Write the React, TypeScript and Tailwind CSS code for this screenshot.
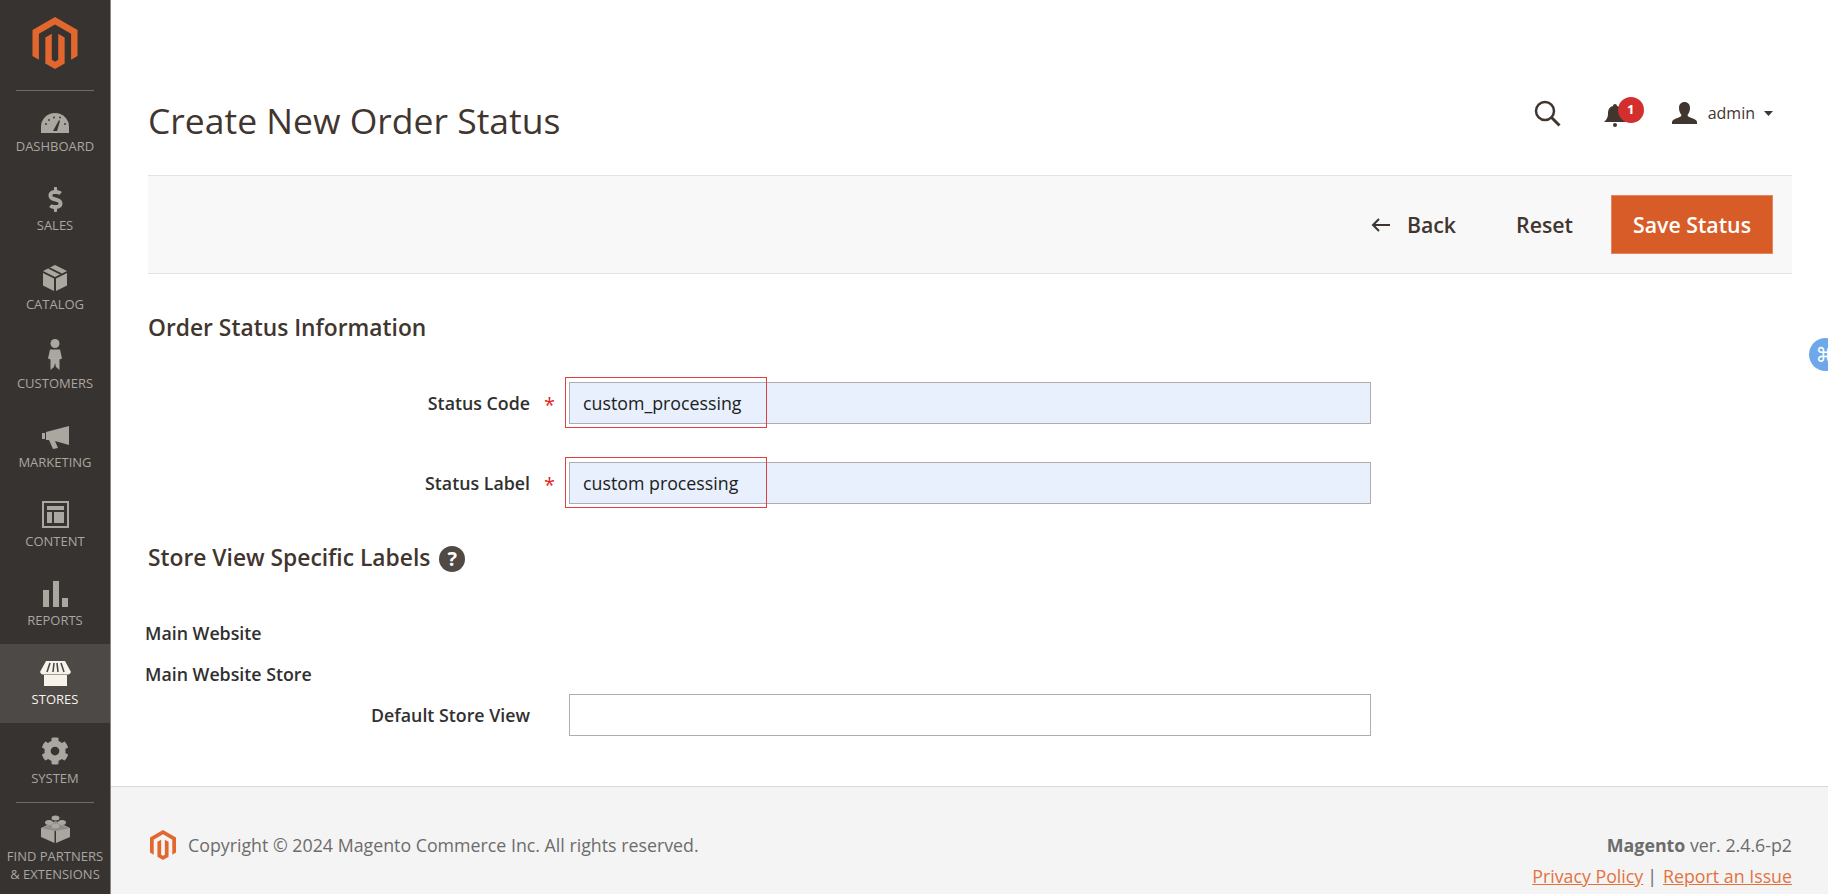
import { FaCog, FaDollarSign } from "react-icons/fa";
import { SiMagento } from "react-icons/si";

function DashboardIcon() {
  return (
    <svg width="28" height="20" viewBox="0 0 28 20">
      <path d="M0 20v-6a14 14 0 0 1 28 0v6z" fill="currentColor" />
      <path d="M12 18l6-11 1 1-3 10z" fill="#373330" />
      <g fill="#373330">
        <circle cx="5" cy="11" r="0.9" />
        <circle cx="8" cy="7" r="0.9" />
        <circle cx="13" cy="4.5" r="0.9" />
        <circle cx="19" cy="4.5" r="0.9" />
        <circle cx="24" cy="11" r="0.9" />
      </g>
    </svg>
  );
}

function CatalogIcon() {
  return (
    <svg width="24" height="26" viewBox="0 0 24 26" fill="currentColor">
      <path d="M12 0l12 6-12 6L0 6z" />
      <path d="M5 3.4l12 6 2-1-12-6z" fill="#373330" />
      <path d="M0 8l11 5.5V26L0 20.5zM24 8l-11 5.5V26l11-5.500z" />
    </svg>
  );
}

function CustomerIcon() {
  return (
    <svg width="14" height="31" viewBox="0 0 14 31" fill="currentColor">
      <circle cx="7" cy="4.5" r="4.5" />
      <path d="M2 10.500h10l2 9-2.500 1V31L8 28l-1-4-1 4-3.500 3V20.500L0 19.500z" />
    </svg>
  );
}

function MarketingIcon() {
  return (
    <svg width="27" height="23" viewBox="0 0 27 23" fill="currentColor">
      <rect x="0" y="7" width="3" height="6" />
      <path d="M4 6L27 0v19l-14-4 3 7-5 1-4-9H4z" />
    </svg>
  );
}

function ContentIcon() {
  return (
    <svg width="27" height="27" viewBox="0 0 27 27" fill="currentColor">
      <path fillRule="evenodd" d="M0 0h27v27H0zm2 2v23h23V2z" />
      <rect x="5" y="5" width="17" height="4" />
      <rect x="5" y="11" width="5" height="11" />
      <rect x="12" y="11" width="10" height="11" />
    </svg>
  );
}

function ReportsIcon() {
  return (
    <svg width="25" height="26" viewBox="0 0 25 26" fill="currentColor">
      <rect x="0" y="9" width="6" height="17" />
      <rect x="10" y="0" width="6" height="26" />
      <rect x="19" y="17" width="6" height="9" />
    </svg>
  );
}

function StoresIcon() {
  return (
    <svg width="31" height="25" viewBox="0 0 31 25" fill="currentColor">
      <path d="M6 0h19l6 11q-1 2.500-3 2.500H3Q1 13.500 0 11z" />
      <path d="M4 14h23v11H4z" />
      <path d="M10 2L7 11M14 2l-1 9M17 2l1 9M21 2l3 9" stroke="#4d4946" strokeWidth="1.600" fill="none" />
    </svg>
  );
}

function PartnersIcon() {
  return (
    <svg width="29" height="28" viewBox="0 0 29 28" fill="currentColor">
      <path d="M14.500 6L29 13v9l-14 6V17z" />
      <path d="M14.500 6L0 13v9l13.500 6V17z" />
      <path d="M14.500 7L28 13.500 14.500 16 1 13.500z" fill="#8f8b86" />
      <ellipse cx="14.500" cy="3" rx="4" ry="2.500" />
      <ellipse cx="8" cy="7.500" rx="4" ry="2.500" />
      <ellipse cx="21" cy="7.500" rx="4" ry="2.500" />
      <ellipse cx="14.500" cy="11" rx="4" ry="2.500" />
    </svg>
  );
}

const navItems = [
  { label: "DASHBOARD", icon: <DashboardIcon /> },
  { label: "SALES", icon: <FaDollarSign size={25} /> },
  { label: "CATALOG", icon: <CatalogIcon /> },
  { label: "CUSTOMERS", icon: <CustomerIcon /> },
  { label: "MARKETING", icon: <MarketingIcon /> },
  { label: "CONTENT", icon: <ContentIcon /> },
  { label: "REPORTS", icon: <ReportsIcon /> },
  { label: "STORES", icon: <StoresIcon />, active: true },
  { label: "SYSTEM", icon: <FaCog size={28} /> },
];

function Sidebar() {
  return (
    <aside className="flex h-full w-[111px] shrink-0 flex-col border-r border-[#8a8885] bg-[#373330] text-[#aaa6a0]">
      <div className="mx-[16px] flex h-[91px] shrink-0 items-start justify-center border-b border-[#6f6b67] pt-[17px]">
        <SiMagento size={52} className="text-[#e2672f]" />
      </div>
      {navItems.map((item) => (
        <div
          key={item.label}
          className={`flex h-[79px] shrink-0 flex-col items-center ${
            item.active ? "bg-[#4d4946] text-[#f7f3eb]" : ""
          }`}
        >
          <div className="flex h-[42px] items-end">{item.icon}</div>
          <span className="mt-[4px] text-[13px] leading-[18px]">{item.label}</span>
        </div>
      ))}
      <div className="mx-[16px] border-t border-[#6f6b67]" />
      <div className="flex flex-col items-center">
        <div className="flex h-[40px] items-end">
          <PartnersIcon />
        </div>
        <span className="mt-[4px] text-center text-[13px] leading-[18px]">
          FIND PARTNERS
          <br />& EXTENSIONS
        </span>
      </div>
    </aside>
  );
}

function Header() {
  return (
    <header className="flex h-[175px] shrink-0 items-start justify-between">
      <h1 className="mt-[93px] text-[35.5px] leading-[54px] font-normal text-[#41362f]">
        Create New Order Status
      </h1>
      <div className="mt-[98px] mr-[19px] flex h-[30px] items-center text-[#41362f]">
        <svg width="27" height="27" viewBox="0 0 27 27" fill="none" stroke="currentColor">
          <circle cx="11" cy="11" r="9" strokeWidth="2.500" />
          <path d="M17.500 17.500l8 8" strokeWidth="3" />
        </svg>
        <div className="relative mt-[3px] ml-[43px] h-[24px] w-[22px]">
          <svg width="22" height="24" viewBox="0 0 22 24" fill="currentColor">
            <path d="M11 1a2 2 0 0 1 2 2c4 1 5 4 5 8 0 4 2 6 4 8H0c2-2 4-4 4-8 0-4 1-7 5-8a2 2 0 0 1 2-2z" />
            <circle cx="11" cy="22" r="2" />
          </svg>
          <span className="absolute -top-[6px] left-[14px] flex h-[26px] w-[26px] items-center justify-center rounded-full bg-[#d32f2f] text-[13px] font-bold text-white">
            1
          </span>
        </div>
        <svg className="ml-[46px]" width="25" height="22" viewBox="0 0 25 22" fill="currentColor">
          <path d="M12.500 0c3.500 0 5.500 2.500 5.500 6 0 3-1.200 5.500-2.500 7 .3 1.500 1.500 2 4 3 3 1 5.500 2 5.500 4v2H0v-2c0-2 2.500-3 5.500-4 2.500-1 3.700-1.500 4-3C8.200 11.500 7 9 7 6c0-3.500 2-6 5.500-6z" />
        </svg>
        <span className="ml-[11px] text-[16px]">admin</span>
        <svg className="ml-[9px]" width="9" height="5" viewBox="0 0 9 5" fill="currentColor">
          <path d="M0 0h9L4.500 5z" />
        </svg>
      </div>
    </header>
  );
}

function ActionBar() {
  return (
    <div className="flex h-[99px] shrink-0 items-center justify-end border-y border-[#e3e3e3] bg-[#f8f8f8] pr-[19px] text-[21.3px] font-semibold text-[#41362f]">
      <svg width="19" height="14" viewBox="0 0 19 14" fill="none" stroke="currentColor" strokeWidth="2">
        <path d="M19 7H2M8 1L2 7l6 6" />
      </svg>
      <span className="ml-[17px]">Back</span>
      <span className="ml-[60px]">Reset</span>
      <button className="ml-[38px] h-[59px] w-[162px] border border-[#e8855a] bg-[#d85c27] text-white">
        Save Status
      </button>
    </div>
  );
}

function FieldRow({
  label,
  value,
  required,
  marked,
  className,
}: {
  label: string;
  value: string;
  required?: boolean;
  marked?: boolean;
  className?: string;
}) {
  return (
    <div className={`flex items-center ${className ?? ""}`}>
      <label className="w-[382px] text-right text-[17.8px] font-semibold text-[#303030]">{label}</label>
      <span className="w-[39px] pt-[4px] text-center text-[20px] leading-none text-[#e22626]">
        {required ? "*" : ""}
      </span>
      <div className="relative h-[42px] w-[802px]">
        <input
          readOnly
          value={value}
          className={`h-full w-full border border-[#adadad] px-[13px] text-[17.8px] text-[#202020] outline-none ${
            marked ? "bg-[#e8f0fe]" : "bg-white"
          }`}
        />
        {marked && (
          <div className="absolute -top-[5px] -left-[4px] h-[51px] w-[202px] border border-[#e04040]" />
        )}
      </div>
    </div>
  );
}

function Footer() {
  return (
    <footer className="flex h-[108px] shrink-0 justify-between border-t border-[#d9d9d9] bg-[#f4f4f4] pt-[46px] pr-[36px] pl-[37px] text-[17.8px] leading-[24px] text-[#6c6c6c]">
      <div className="flex h-[24px] items-center">
        <SiMagento size={30} className="text-[#e2672f]" />
        <span className="ml-[10px]">Copyright © 2024 Magento Commerce Inc. All rights reserved.</span>
      </div>
      <div className="text-right">
        <div>
          <b className="font-bold">Magento</b> ver. 2.4.6-p2
        </div>
        <div className="mt-[7px]">
          <a className="text-[#e2733f] underline">Privacy Policy</a>
          <span className="mr-[6px] ml-[4px]">|</span>
          <a className="text-[#e2733f] underline">Report an Issue</a>
        </div>
      </div>
    </footer>
  );
}

export default function App() {
  return (
    <div className="relative flex h-[894px] w-[1828px] overflow-hidden bg-white font-['Open_Sans','Liberation_Sans',sans-serif]">
      <Sidebar />
      <div className="flex min-w-0 flex-1 flex-col">
        <main className="flex flex-1 flex-col pr-[36px] pl-[37px]">
          <Header />
          <ActionBar />
          <h2 className="mt-[40px] text-[22.8px] leading-[28px] font-semibold text-[#41362f]">
            Order Status Information
          </h2>
          <FieldRow className="mt-[40px]" label="Status Code" value="custom_processing" required marked />
          <FieldRow className="mt-[38px]" label="Status Label" value="custom processing" required marked />
          <div className="mt-[39px] flex items-center">
            <h2 className="text-[22.8px] leading-[28px] font-semibold text-[#41362f]">
              Store View Specific Labels
            </h2>
            <span className="mt-[3px] ml-[9px] flex h-[26px] w-[26px] items-center justify-center rounded-full bg-[#514943] text-[20px] font-bold text-white">
              ?
            </span>
          </div>
          <div className="mt-[49px] -ml-[3px] text-[17.8px] leading-[24px] font-semibold text-[#303030]">
            Main Website
          </div>
          <div className="mt-[17px] -ml-[3px] text-[17.8px] leading-[24px] font-semibold text-[#303030]">
            Main Website Store
          </div>
          <FieldRow className="mt-[8px]" label="Default Store View" value="" />
        </main>
        <Footer />
      </div>
      <div className="absolute top-[338px] left-[1809px] flex h-[33px] w-[33px] items-center justify-center rounded-full bg-[#6fa8ea] font-['DejaVu_Sans',sans-serif] text-[20px] text-white">
        ⌘
      </div>
    </div>
  );
}
